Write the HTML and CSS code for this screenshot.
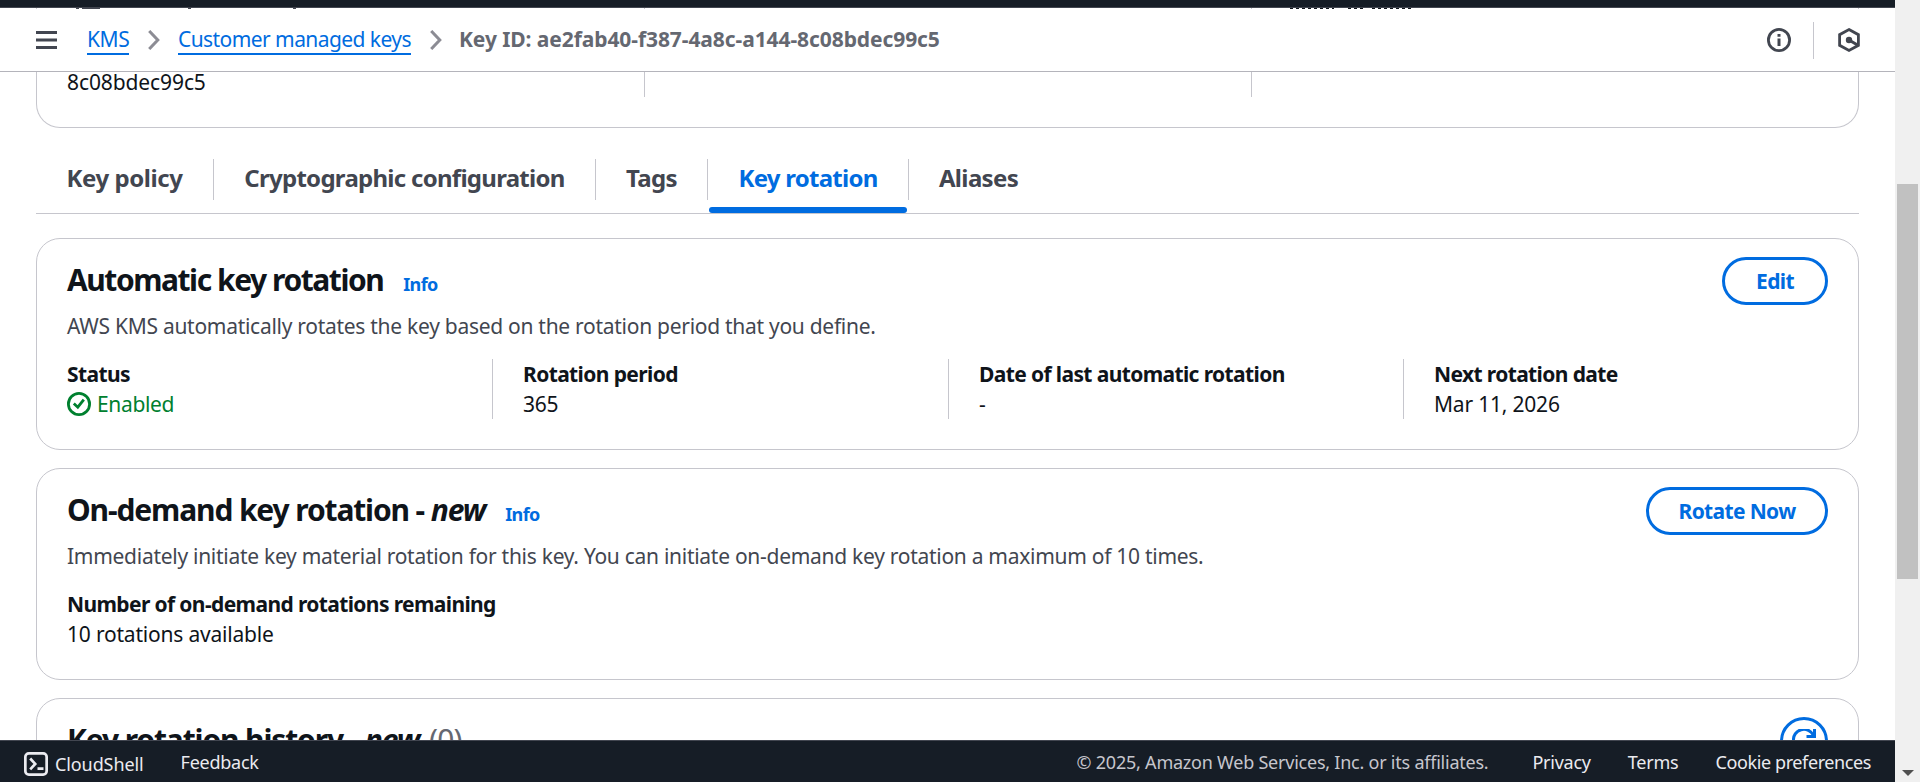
FILE: index.html
```
<!DOCTYPE html>
<html lang="en">
<head>
<meta charset="utf-8">
<title>Customer managed keys | KMS</title>
<link rel="stylesheet" href="styles.css">
</head>
<body>
<div class="page">
  <div class="topbar"></div>
  <div class="sliver">
    <svg width="1895" height="1" viewBox="0 0 1895 1">
      <path d="M36 .5h1M644 .5h1M1251 .5h1M1858 .5h1" stroke="#c6c6cd"/>
      <path d="M76 .5h3M82 .5h18M188 .5h3M293 .5h3" stroke="#424650"/>
      <path d="M1290 .5h44M1348 .5h15M1372 .5h40" stroke="#0f141a" stroke-dasharray="3 3"/>
    </svg>
  </div>
  <header class="crumbbar">
    <svg class="menu" width="21" height="18" viewBox="0 0 21 18"><path d="M0 1.5h21M0 9h21M0 16.5h21" stroke="#424650" stroke-width="3"/></svg>
    <nav class="crumbs">
      <a class="crumb crumb-kms">KMS</a>
      <svg class="chev" width="12" height="20" viewBox="0 0 12 20"><path d="M1.2 1l8.6 9-8.6 9" fill="none" stroke="#8c8c94" stroke-width="3"/></svg>
      <a class="crumb crumb-keys">Customer managed keys</a>
      <svg class="chev" width="12" height="20" viewBox="0 0 12 20"><path d="M1.2 1l8.6 9-8.6 9" fill="none" stroke="#8c8c94" stroke-width="3"/></svg>
      <span class="crumb-current">Key ID: ae2fab40-f387-4a8c-a144-8c08bdec99c5</span>
    </nav>
    <div class="tools">
      <svg width="24" height="24" viewBox="0 0 24 24"><circle cx="12" cy="12" r="10.6" fill="none" stroke="#424650" stroke-width="2.8"/><path d="M12 6v2.8M12 10.5v7.5" stroke="#424650" stroke-width="3"/></svg>
      <span class="tools-line"></span>
      <svg width="24" height="24" viewBox="0 0 24 24"><path d="M12 1.6l9.4 5.1v10.6L12 22.4l-9.4-5.1V6.7z" fill="none" stroke="#424650" stroke-width="2.8"/><circle cx="12" cy="12" r="3.2" fill="#424650"/><path d="M12 12l8.500 5" stroke="#424650" stroke-width="3"/></svg>
    </div>
  </header>

  <main class="content">
    <section class="card card-general">
      <div class="cols cols-3">
        <div class="col"><span class="key-tail">8c08bdec99c5</span></div>
        <div class="col"></div>
        <div class="col"></div>
      </div>
    </section>

    <nav class="tabs">
      <a class="tab tab-policy">Key policy</a>
      <a class="tab tab-crypto">Cryptographic configuration</a>
      <a class="tab tab-tags">Tags</a>
      <a class="tab tab-rotation active">Key rotation</a>
      <a class="tab tab-aliases">Aliases</a>
    </nav>

    <section class="card">
      <div class="card-head">
        <h2 class="title title-auto">Automatic key rotation<a class="info">Info</a></h2>
        <button class="btn btn-edit">Edit</button>
      </div>
      <p class="desc">AWS KMS automatically rotates the key based on the rotation period that you define.</p>
      <div class="cols cols-4">
        <div class="col"><div class="label">Status</div>
          <div class="value enabled"><svg width="24" height="24" viewBox="0 0 24 24" fill="none" stroke="#00802f" stroke-width="2.8"><circle cx="12" cy="12" r="10.6"/><path d="M6.8 11.5l4 3.7 6-7.6"/></svg>Enabled</div></div>
        <div class="col"><div class="label">Rotation period</div><div class="value">365</div></div>
        <div class="col"><div class="label">Date of last automatic rotation</div><div class="value">-</div></div>
        <div class="col"><div class="label">Next rotation date</div><div class="value">Mar 11, 2026</div></div>
      </div>
    </section>

    <section class="card">
      <div class="card-head">
        <h2 class="title title-demand">On-demand key rotation - <em>new</em><a class="info">Info</a></h2>
        <button class="btn btn-rotate">Rotate Now</button>
      </div>
      <p class="desc">Immediately initiate key material rotation for this key. You can initiate on-demand key rotation a maximum of 10 times.</p>
      <div class="cols">
        <div class="col"><div class="label">Number of on-demand rotations remaining</div><div class="value">10 rotations available</div></div>
      </div>
    </section>

    <section class="card">
      <div class="card-head">
        <h2 class="title title-history">Key rotation history - <em>new</em> <span class="count">(0)</span></h2>
        <button class="btn btn-round"><svg width="24" height="24" viewBox="0 0 24 24" fill="none" stroke="#006ce0" stroke-width="3"><path d="M1.5 12A10.5 10.5 0 0 1 21.5 6.5M22.5 0v7.5h-8M22.5 12A10.5 10.5 0 0 1 1.5 12"/></svg></button>
      </div>
    </section>
  </main>

  <footer class="footer">
    <div class="shell"><svg width="24" height="24" viewBox="0 0 24 24" fill="none" stroke="#ebebf0" stroke-width="2.7"><rect x="1.35" y="1.35" width="21.3" height="21.3" rx="3.5"/><path d="M6.2 6.5l5 5.4-5 5.4M13.5 16.6h6"/></svg><span class="f-shell">CloudShell</span></div>
    <span class="f-feedback">Feedback</span>
    <span class="f-copy">© 2025, Amazon Web Services, Inc. or its affiliates.</span>
    <span class="f-privacy">Privacy</span>
    <span class="f-terms">Terms</span>
    <span class="f-cookie">Cookie preferences</span>
  </footer>
</div>
<aside class="scrollbar"><div class="thumb"></div><div class="arrow"></div></aside>
</body>
</html>
```
FILE: styles.css
```
* { box-sizing: border-box; }
html, body { height: 100%; }
body {
  margin: 0;
  display: flex;
  overflow: hidden;
  background: #fff;
  color: #0f141a;
  font: 400 21px/30px "Noto Sans", "Open Sans", sans-serif;
  white-space: nowrap;
}
svg { display: block; flex: none; }
.page { width: 1895px; height: 782px; display: flex; flex-direction: column; }

/* top bars */
.topbar { flex: none; height: 8px; background: #161d26; border-bottom: 1px solid #424650; }
.sliver { flex: none; height: 1px; overflow: hidden; }
.crumbbar {
  flex: none;
  height: 63px;
  display: flex;
  align-items: center;
  padding: 0 34px 0 36px;
  border-bottom: 1px solid #b4b4bb;
}
.crumbs { display: flex; align-items: center; margin-left: 30px; }
.crumb { height: 29px; line-height: 27px; color: #006ce0; border-bottom: 2px solid #006ce0; }
.crumb-kms { width: 42px; letter-spacing: -.4px; }
.crumb-keys { width: 233px; letter-spacing: -.57px; }
.chev { margin: 0 18px 0 19px; }
.crumb-current { height: 29px; margin-left: -1px; line-height: 27px; font-weight: 700; color: #656871; letter-spacing: -.08px; }
.tools { margin-left: auto; display: flex; align-items: center; }
.tools-line { width: 1px; height: 37px; margin: 0 23px 0 22px; background: #c6c6cd; }

/* content */
.content { flex: 1; min-height: 0; overflow: hidden; padding: 0 36px; }
.card {
  height: 212px;
  margin-bottom: 18px;
  padding: 18px 30px 0;
  border: 1px solid #c6c6cd;
  border-radius: 24px;
}
.card-general { height: 56px; margin: 0; padding-top: 0; border-top: 0; border-radius: 0 0 24px 24px; }
.key-tail { display: block; margin-top: -5px; letter-spacing: -.1px; }
.card-head { display: flex; justify-content: space-between; align-items: flex-start; height: 48px; }
.title { margin: 0; padding-top: 5px; font-size: 30px; font-weight: 700; line-height: 36px; }
.title-auto { letter-spacing: -1.45px; }
.title-demand, .title-history { letter-spacing: -1.13px; }
.info { margin-left: 20px; font-size: 18px; letter-spacing: -.65px; color: #006ce0; }
.count { margin-left: 3px; font-weight: 400; letter-spacing: -.8px; color: #656871; }
.desc { margin: 6px 0 18px; color: #424650; letter-spacing: -.28px; }
.cols { display: grid; }
.cols-3 { grid-template-columns: 577px 607px 1fr; height: 25px; }
.cols-4 { grid-template-columns: 425px 456px 455px 1fr; }
.col + .col { border-left: 1px solid #c6c6cd; padding-left: 30px; }
.col { height: 60px; }
.cols-3 .col { height: 25px; }
.label { font-weight: 700; letter-spacing: -.62px; }
.value { letter-spacing: -.2px; }
.enabled { display: flex; align-items: center; gap: 6px; color: #00802f; letter-spacing: -.35px; }

/* buttons */
.btn {
  height: 48px;
  padding: 0;
  border: 3px solid #006ce0;
  border-radius: 24px;
  background: #fff;
  color: #006ce0;
  font: 700 21px/40px "Noto Sans", "Open Sans", sans-serif;
  letter-spacing: -.65px;
}
.btn-edit { width: 106px; }
.btn-rotate { width: 182px; }
.btn-round { width: 48px; display: flex; align-items: center; justify-content: center; }

/* tabs */
.tabs {
  display: flex;
  height: 86px;
  margin-bottom: 24px;
  padding-top: 31px;
  border-bottom: 1px solid #c6c6cd;
}
.tab {
  position: relative;
  height: 41px;
  border-right: 1px solid #c6c6cd;
  color: #424650;
  font-size: 24px;
  font-weight: 700;
  line-height: 38px;
  text-align: center;
}
.tab-policy { width: 178px; letter-spacing: -.42px; }
.tab-crypto { width: 382px; letter-spacing: -.72px; }
.tab-tags { width: 112px; letter-spacing: -.6px; }
.tab-rotation { width: 201px; letter-spacing: -.75px; }
.tab-aliases { width: 139px; border-right: 0; letter-spacing: -.65px; }
.tab.active { color: #006ce0; }
.tab.active::after {
  content: "";
  position: absolute;
  left: 1px;
  right: 1px;
  bottom: -13px;
  height: 6px;
  border-radius: 3px;
  background: #006ce0;
}

/* footer */
.footer {
  flex: none;
  height: 42px;
  display: flex;
  align-items: center;
  padding: 0 24px;
  border-top: 1px solid #424650;
  background: #161d26;
  color: #ebebf0;
  font-size: 18px;
  line-height: 24px;
}
.shell { display: flex; align-items: center; gap: 7px; padding-top: 4px; }
.f-shell { letter-spacing: -.1px; }
.f-feedback { margin-left: 37px; letter-spacing: -.25px; }
.f-copy { margin-left: auto; color: #c6c6cd; letter-spacing: -.23px; }
.f-privacy { margin-left: 44px; letter-spacing: -.25px; }
.f-terms { margin-left: 37px; letter-spacing: -.2px; }
.f-cookie { margin-left: 37px; letter-spacing: -.4px; }

/* window scrollbar */
.scrollbar { width: 25px; height: 782px; display: flex; flex-direction: column; align-items: center; background: #f0f0f0; }
.thumb { width: 21px; height: 395px; margin-top: 184px; background: #c1c1c1; }
.arrow { margin-top: 191px; border: 6px solid transparent; border-top-color: #505050; border-bottom: 0; }
```
